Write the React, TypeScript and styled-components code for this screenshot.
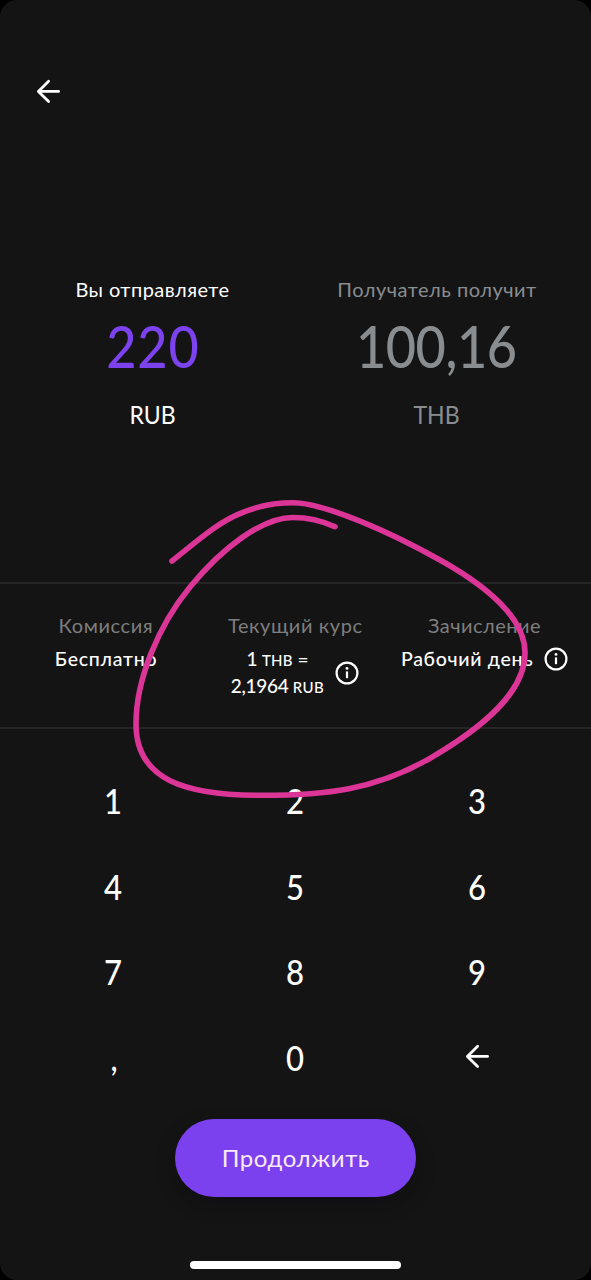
import React from "react";
import styled, { createGlobalStyle } from "styled-components";

const GlobalStyle = createGlobalStyle`
  html, body { margin: 0; background: #000; }
  * { box-sizing: border-box; }
`;

const Screen = styled.main`
  position: relative;
  display: flex;
  flex-direction: column;
  width: 591px;
  height: 1280px;
  overflow: hidden;
  border-radius: 17px;
  background: #141414;
  color: #fff;
  font-family: Lato, "Noto Sans", sans-serif;
`;

const Header = styled.header`
  display: flex;
  height: 274px;
  padding: 79px 0 0 36px;
`;

const IconButton = styled.button`
  display: flex;
  align-items: center;
  justify-content: center;
  width: 25px;
  height: 25px;
  padding: 0;
  border: 0;
  background: none;
  color: inherit;
`;

const Amounts = styled.section`
  display: grid;
  grid-template-columns: 1fr 1fr;
  height: 308px;
  padding: 0 12px 0 10px;
`;

const Amount = styled.div<{ $muted?: boolean }>`
  display: flex;
  flex-direction: column;
  align-items: center;
  color: ${(p) => (p.$muted ? "#8a8d8f" : "#fff")};
`;

const Line = styled.span<{ $size: number; $height: number; $spacing?: number; $weight?: number }>`
  font-size: ${(p) => p.$size}px;
  line-height: ${(p) => p.$height}px;
  letter-spacing: ${(p) => p.$spacing ?? 0}px;
  margin-right: ${(p) => -(p.$spacing ?? 0)}px;
  font-weight: ${(p) => p.$weight ?? 400};
  white-space: nowrap;
`;

const Value = styled(Line)<{ $accent?: boolean }>`
  margin-top: 13px;
  color: ${(p) => (p.$accent ? "#7b42ee" : "inherit")};
  transform: scaleX(0.9);
`;

const Currency = styled(Line)`
  margin-top: 25px;
  transform: scaleX(0.94);
`;

const Info = styled.section`
  display: grid;
  grid-template-columns: repeat(3, 1fr);
  height: 147px;
  padding: 27px 12px 0 11px;
  border-top: 2px solid #252525;
  border-bottom: 2px solid #252525;
`;

const InfoItem = styled.div`
  display: flex;
  flex-direction: column;
  align-items: center;
`;

const InfoLabel = styled(Line)`
  color: #7e7e7e;
`;

const InfoValue = styled.div`
  display: flex;
  align-items: center;
  gap: 11px;
  margin-top: 7px;
`;

const InfoText = styled.div`
  display: flex;
  flex-direction: column;
  align-items: center;
`;

const Unit = styled.small`
  font-size: 15px;
  letter-spacing: 0.3px;
`;

const Keypad = styled.section`
  display: grid;
  grid-template-columns: repeat(3, 182px);
  grid-auto-rows: 85.7px;
  justify-content: center;
  margin-top: 29px;
`;

const Key = styled.button`
  display: flex;
  align-items: center;
  justify-content: center;
  padding: 0;
  border: 0;
  background: none;
  color: #fff;
  font-family: inherit;
  font-size: 34.5px;
  font-weight: 500;
  line-height: 40px;
`;

const Digit = styled.span`
  transform: scaleX(0.9);
`;

const EraseKey = styled(Key)`
  padding-bottom: 2px;
`;

const Footer = styled.footer`
  display: flex;
  flex-direction: column;
  align-items: center;
  margin-top: 18.2px;
`;

const ContinueButton = styled.button`
  width: 241px;
  height: 78px;
  padding: 0;
  border: 0;
  border-radius: 39px;
  background: #7b41ee;
  box-shadow: 0 8px 18px rgba(8, 8, 16, 0.35);
  color: #fbeaff;
  font-family: inherit;
`;

const HomeIndicator = styled.div`
  width: 211px;
  height: 8px;
  margin-top: 64px;
  border-radius: 4px;
  background: #fff;
`;

const Marker = styled.svg`
  position: absolute;
  inset: 0;
  pointer-events: none;
`;

const BackArrow = () => (
  <svg width="25" height="25" viewBox="0 0 25 25" fill="none" stroke="currentColor" strokeWidth="2.8" strokeLinecap="round" strokeLinejoin="round">
    <path d="M22.6 12.4H2.4M12.6 2.3L2.4 12.4l10.2 10.2" />
  </svg>
);

const InfoIcon = () => (
  <svg width="24" height="24" viewBox="0 0 24 24" fill="none" stroke="currentColor">
    <circle cx="12" cy="12" r="10.4" strokeWidth="2.2" />
    <path d="M12 10.4v6.8" strokeWidth="2.2" />
    <circle cx="12" cy="7.4" r="1.4" fill="currentColor" stroke="none" />
  </svg>
);

const markerPath = [
  "M172 561",
  "C186 550 200 538 213.5 528.5",
  "C238 511 266 502.8 293 502.8",
  "C324 502.8 390 532 440 560",
  "C474 579 525 612 525 653",
  "C525 692 484 727 430 758.3",
  "C375 790 325 795.3 262 795.3",
  "C185 795.3 136 780 136 724",
  "C136 680 158 626 190 587",
  "C222 548 262 517.5 293 517.5",
  "C308 517.5 320 520 335 526.7",
].join(" ");

const keys = ["1", "2", "3", "4", "5", "6", "7", "8", "9", ",", "0"];

export default function App() {
  return (
    <>
      <GlobalStyle />
      <Screen>
        <Header>
          <IconButton aria-label="Назад"><BackArrow /></IconButton>
        </Header>
        <Amounts>
          <Amount>
            <Line $size={20} $height={30} $spacing={0.45}>Вы отправляете</Line>
            <Value $size={58} $height={58} $spacing={1} $weight={500} $accent>220</Value>
            <Currency $size={24.5} $height={30}>RUB</Currency>
          </Amount>
          <Amount $muted>
            <Line $size={20} $height={30} $spacing={0.5}>Получатель получит</Line>
            <Value $size={58} $height={58} $spacing={-0.5} $weight={500}>100,16</Value>
            <Currency $size={24.5} $height={30}>THB</Currency>
          </Amount>
        </Amounts>
        <Info>
          <InfoItem>
            <InfoLabel $size={20} $height={28} $spacing={0.6}>Комиссия</InfoLabel>
            <InfoValue>
              <Line $size={19.5} $height={26} $spacing={0.75} $weight={500}>Бесплатно</Line>
            </InfoValue>
          </InfoItem>
          <InfoItem>
            <InfoLabel $size={20} $height={28} $spacing={0.6}>Текущий курс</InfoLabel>
            <InfoValue>
              <InfoText>
                <Line $size={19} $height={26} $spacing={-0.2} $weight={500}>1 <Unit>THB</Unit> =</Line>
                <Line $size={19} $height={26} $spacing={-0.3} $weight={500}>2,1964 <Unit>RUB</Unit></Line>
              </InfoText>
              <InfoIcon />
            </InfoValue>
          </InfoItem>
          <InfoItem>
            <InfoLabel $size={20} $height={28} $spacing={0.5}>Зачисление</InfoLabel>
            <InfoValue>
              <Line $size={19.5} $height={26} $spacing={0.7} $weight={500}>Рабочий день</Line>
              <InfoIcon />
            </InfoValue>
          </InfoItem>
        </Info>
        <Keypad>
          {keys.map((k) => <Key key={k}><Digit>{k}</Digit></Key>)}
          <EraseKey aria-label="Стереть"><BackArrow /></EraseKey>
        </Keypad>
        <Footer>
          <ContinueButton>
            <Line $size={24} $height={30} $spacing={0.6}>Продолжить</Line>
          </ContinueButton>
          <HomeIndicator />
        </Footer>
        <Marker width="591" height="1280" viewBox="0 0 591 1280" fill="none" aria-hidden="true">
          <path d={markerPath} stroke="#dc3598" strokeWidth="5.6" strokeLinecap="round" strokeLinejoin="round" />
        </Marker>
      </Screen>
    </>
  );
}
